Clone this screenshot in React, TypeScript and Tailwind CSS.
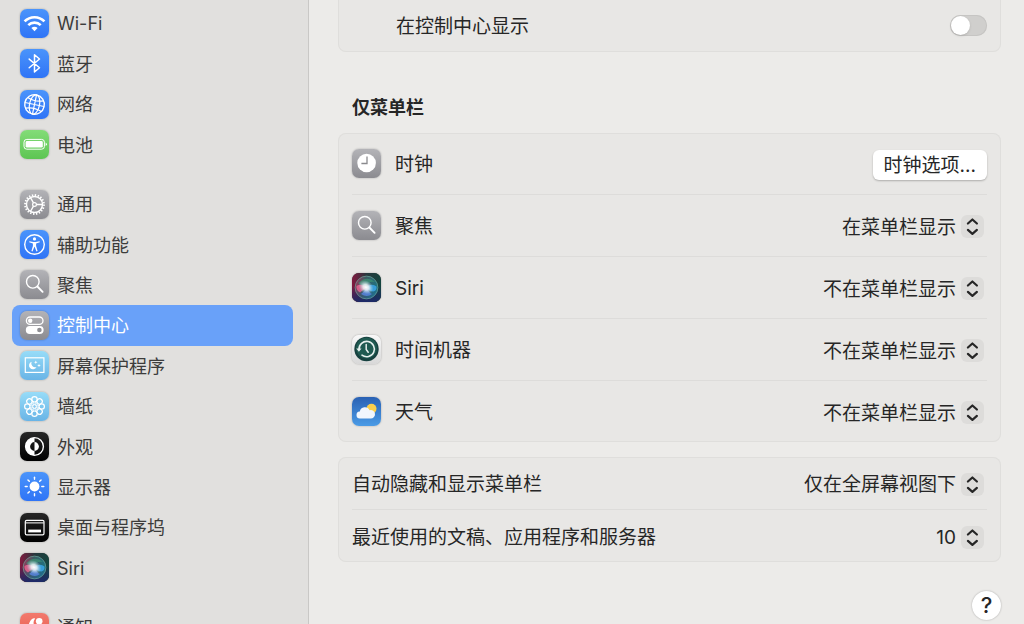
import { useId, useState, type ReactNode } from 'react';
import clsx from 'clsx';

const TILE_COLORS = {
  blue: ['#4a94fb', '#2f74f6'],
  green: ['#83dc78', '#5dc553'],
  gray: ['#b3b3b7', '#8b8b90'],
  sky: ['#97dcf8', '#69b4e6'],
  black: ['#272727', '#000000'],
  red: ['#f27a6d', '#e8584a'],
  white: ['#f8f8f8', '#d8d8d8'],
  weather: ['#2a61b3', '#4a9be6'],
};

function Tile({ color, children }: { color: keyof typeof TILE_COLORS; children: ReactNode }) {
  const id = useId();
  const [from, to] = TILE_COLORS[color];
  return (
    <svg viewBox="0 0 29 29" className="size-[29px] shrink-0 rounded-[7px] shadow-[0_0_2px_rgba(0,0,0,0.3)]" fill="none" aria-hidden="true">
      <defs>
        <linearGradient id={id} x1="0" y1="0" x2="0" y2="1">
          <stop offset="0" stopColor={from} />
          <stop offset="1" stopColor={to} />
        </linearGradient>
      </defs>
      <rect width="29" height="29" fill={`url(#${id})`} />
      {children}
    </svg>
  );
}

function WifiIcon() {
  return (
    <Tile color="blue">
      <g stroke="#fff" strokeWidth="2.6">
        <path d="M4.6 12.4a13.800 13.800 0 0 1 19.800 0" />
        <path d="M8.300 16.200a8.800 8.800 0 0 1 12.400 0" />
      </g>
      <path d="M14.500 22.200l-3.100-3.100a4.400 4.400 0 0 1 6.200 0z" fill="#fff" />
    </Tile>
  );
}

function BluetoothIcon() {
  return (
    <Tile color="blue">
      <path d="M9.200 10.100l10.300 8.700-5 4.200V5.800l5 4.200-10.300 8.700" stroke="#fff" strokeWidth="1.5" strokeLinejoin="round" strokeLinecap="round" />
    </Tile>
  );
}

function NetworkIcon() {
  return (
    <Tile color="blue">
      <g stroke="#fff" strokeWidth="1.2" transform="rotate(12 14.5 14.5)">
        <circle cx="14.5" cy="14.5" r="9.8" strokeWidth="1.4" />
        <ellipse cx="14.5" cy="14.5" rx="5" ry="9.8" />
        <path d="M14.5 4.7v19.600M4.800 14.500h19.400M6.400 9q8.100 3.200 16.200 0M6.400 20q8.100-3.200 16.200 0" />
      </g>
    </Tile>
  );
}

function BatteryIcon() {
  return (
    <Tile color="green">
      <rect x="4" y="9.400" width="20.400" height="9.800" rx="2.800" stroke="#fff" strokeWidth="1" />
      <rect x="5.600" y="11" width="17.200" height="6.600" rx="1.400" fill="#fff" />
      <path d="M25.600 12.600q1.300.5 1.300 1.700t-1.300 1.700z" fill="#fff" />
    </Tile>
  );
}

function GearIcon() {
  return (
    <Tile color="gray">
      <g stroke="#fff">
        <circle cx="14.5" cy="14.5" r="9.400" strokeWidth="2" strokeDasharray="1.4 1.553" />
        <circle cx="14.5" cy="14.5" r="8" strokeWidth="1.4" />
        <circle cx="14.5" cy="14.5" r="1.900" strokeWidth="1.200" />
        <path d="M16.400 14.500h6.100M13.500 12.900l-3.100-5.400M13.500 16.100l-3.100 5.400" strokeWidth="1.400" />
      </g>
    </Tile>
  );
}

function AccessibilityIcon() {
  return (
    <Tile color="blue">
      <circle cx="14.5" cy="14.5" r="9.800" stroke="#fff" strokeWidth="1.400" />
      <circle cx="14.5" cy="8.900" r="1.600" fill="#fff" />
      <path d="M9.400 11.300l3.900.8h2.400l3.900-.8.2 1-3.700 1.100v2.700l1.500 5-1.100.4-1.900-4.700h-.2l-1.900 4.700-1.100-.4 1.500-5v-2.700l-3.700-1.100z" fill="#fff" />
    </Tile>
  );
}

function SearchIcon() {
  return (
    <Tile color="gray">
      <circle cx="12.800" cy="11.800" r="6.300" stroke="#fff" strokeWidth="1.400" />
      <path d="M17.400 16.500l5.200 5.300" stroke="#fff" strokeWidth="1.900" strokeLinecap="round" />
    </Tile>
  );
}

function ControlCenterIcon() {
  return (
    <Tile color="gray">
      <rect x="6.400" y="6" width="16.600" height="7.400" rx="3.700" stroke="#fff" strokeWidth="1.300" />
      <circle cx="10.200" cy="9.700" r="2.200" fill="#fff" />
      <rect x="5.800" y="15" width="17.800" height="8" rx="4" fill="#fff" />
      <circle cx="19.400" cy="19" r="2.300" fill="#8f8f94" />
    </Tile>
  );
}

function ScreenSaverIcon() {
  return (
    <Tile color="sky">
      <rect x="5.300" y="6.800" width="18.600" height="14.600" stroke="#fff" strokeWidth="1.200" />
      <path d="M11.600 10.700a3.900 3.900 0 1 0 4.900 5.200 3.900 3.900 0 0 1-4.900-5.200z" fill="#fff" />
      <path d="M15.800 9.400l.5 1.300 1.300.5-1.300.5-.5 1.300-.5-1.300-1.300-.5 1.300-.5zM19 12.700l.5 1.300 1.300.5-1.300.5-.5 1.300-.5-1.300-1.300-.5 1.300-.5z" fill="#fff" />
    </Tile>
  );
}

const EIGHTHS = [0, 45, 90, 135, 180, 225, 270, 315];

function WallpaperIcon() {
  return (
    <Tile color="sky">
      {EIGHTHS.map((deg) => (
        <g key={deg} transform={`rotate(${deg} 14.5 14.5)`} stroke="#fff" strokeWidth="1.2">
          <circle cx="14.5" cy="7.300" r="2.700" />
          <path d="M13.400 9.800l1.100 4.700 1.100-4.700" strokeWidth="0.700" />
        </g>
      ))}
      <circle cx="14.5" cy="14.5" r="1.800" fill="#86c8ef" stroke="#fff" strokeWidth="1" />
    </Tile>
  );
}

function AppearanceIcon() {
  return (
    <Tile color="black">
      <circle cx="14.5" cy="14.5" r="8.900" stroke="#fff" strokeWidth="1.400" />
      <path d="M14.500 5.600a8.900 8.900 0 0 0 0 17.800v-4.500a4.400 4.400 0 0 1 0-8.800z" fill="#fff" />
      <path d="M14.500 10.100a4.400 4.400 0 0 1 0 8.800z" fill="#fff" />
    </Tile>
  );
}

function DisplayIcon() {
  return (
    <Tile color="blue">
      <circle cx="14.5" cy="14.5" r="4.900" fill="#fff" />
      {EIGHTHS.map((deg) => (
        <path key={deg} d="M14.5 7.200V5.200" transform={`rotate(${deg} 14.5 14.5)`} stroke="#fff" strokeWidth="1.400" strokeLinecap="round" />
      ))}
    </Tile>
  );
}

function DockIcon() {
  return (
    <Tile color="black">
      <rect x="5.300" y="7.400" width="18.700" height="14.400" rx="1.400" stroke="#fff" strokeWidth="1.200" />
      <path d="M5.500 9.900h18.300" stroke="#fff" strokeWidth="1" />
      <rect x="8.200" y="16.600" width="12.800" height="2.800" fill="#fff" />
    </Tile>
  );
}

function SiriIcon() {
  const id = useId();
  return (
    <Tile color="black">
      <defs>
        <linearGradient id={`${id}-bg`} x1="0" y1="0" x2="1" y2="0">
          <stop offset="0" stopColor="#83183f" />
          <stop offset="0.5" stopColor="#28383e" />
          <stop offset="1" stopColor="#15453f" />
        </linearGradient>
        <linearGradient id={`${id}-low`} x1="0" y1="0" x2="0" y2="1">
          <stop offset="0.45" stopColor="#1c2d6b" stopOpacity="0" />
          <stop offset="1" stopColor="#1d2968" />
        </linearGradient>
        <linearGradient id={`${id}-orb`} x1="0" y1="0" x2="1" y2="0.3">
          <stop offset="0" stopColor="#d1406f" />
          <stop offset="0.45" stopColor="#4b7a80" />
          <stop offset="1" stopColor="#2599b4" />
        </linearGradient>
        <radialGradient id={`${id}-glow`}>
          <stop offset="0" stopColor="#fff" />
          <stop offset="0.4" stopColor="#eef4f8" stopOpacity="0.85" />
          <stop offset="1" stopColor="#a9d0e0" stopOpacity="0" />
        </radialGradient>
      </defs>
      <rect width="29" height="29" fill={`url(#${id}-bg)`} />
      <rect width="29" height="29" fill={`url(#${id}-low)`} />
      <circle cx="14.5" cy="14.5" r="11.400" fill={`url(#${id}-orb)`} fillOpacity="0.55" stroke="#6fa79d" strokeOpacity="0.750" strokeWidth="0.900" />
      <path d="M6 10q9-8 17-1-7-1-10 5z" fill="#3f9c77" fillOpacity="0.600" />
      <path d="M4.500 13q5-3 10 1.500L8 19.500Q4 17 4.500 13z" fill="#e8648f" fillOpacity="0.850" />
      <path d="M14 14q6-4 10.500-.5.5 4-3 5-4 0-7.500-4.500z" fill="#3da7e8" fillOpacity="0.850" />
      <path d="M9 21q5-4 6-7 2 6 5 7-5 4-11 0z" fill="#5b86e2" fillOpacity="0.800" />
      <ellipse cx="14" cy="14.200" rx="8" ry="6.500" transform="rotate(35 14 14.2)" fill={`url(#${id}-glow)`} />
    </Tile>
  );
}

function NotificationIcon() {
  return (
    <Tile color="red">
      <path d="M15.200 5.500Q12 4.500 9.500 9.500L6.500 17.500a5 5 0 0 0 3.500 6.500h9a5 5 0 0 0 5-5v-5.200A5.500 5.500 0 0 1 15.200 5.500z" fill="#fff" />
      <circle cx="19.200" cy="8.300" r="3.300" fill="#fff" />
    </Tile>
  );
}

function ClockIcon() {
  return (
    <Tile color="gray">
      <circle cx="14.600" cy="14" r="9.300" fill="#fff" />
      <path d="M15 7.600v6.900H9.400" stroke="#8a8a8e" strokeWidth="1.300" />
    </Tile>
  );
}

function TimeMachineIcon() {
  return (
    <Tile color="white">
      <circle cx="14.500" cy="14" r="12.200" fill="#17413f" />
      <circle cx="14.500" cy="13" r="10.500" fill="#256b5d" fillOpacity="0.600" />
      <path d="M7 14.500A7.700 7.700 0 1 1 10 20.200" stroke="#e5efed" strokeWidth="1.600" strokeLinecap="round" />
      <path d="M4.300 13.400h5.200L6.900 16.800z" fill="#e5efed" />
      <path d="M14.200 9.400v5l2 2.900" stroke="#e5efed" strokeWidth="1.500" strokeLinecap="round" />
    </Tile>
  );
}

function WeatherIcon() {
  return (
    <Tile color="weather">
      <circle cx="19.500" cy="11.800" r="5" fill="#fbcf4b" />
      <path d="M8.200 21.500a3.500 3.500 0 0 1-.4-7 5.200 5.200 0 0 1 9.800-1.200 4.200 4.200 0 1 1 .8 8.200z" fill="#f1f6fd" />
    </Tile>
  );
}

const SIDEBAR_GROUPS = [
  {
    className: 'min-h-[162px]',
    items: [
      { label: 'Wi-Fi', icon: <WifiIcon /> },
      { label: '蓝牙', icon: <BluetoothIcon /> },
      { label: '网络', icon: <NetworkIcon /> },
      { label: '电池', icon: <BatteryIcon /> },
    ],
  },
  {
    className: 'min-h-[404px]',
    items: [
      { label: '通用', icon: <GearIcon /> },
      { label: '辅助功能', icon: <AccessibilityIcon /> },
      { label: '聚焦', icon: <SearchIcon /> },
      { label: '控制中心', icon: <ControlCenterIcon /> },
      { label: '屏幕保护程序', icon: <ScreenSaverIcon /> },
      { label: '墙纸', icon: <WallpaperIcon /> },
      { label: '外观', icon: <AppearanceIcon /> },
      { label: '显示器', icon: <DisplayIcon /> },
      { label: '桌面与程序坞', icon: <DockIcon /> },
      { label: 'Siri', icon: <SiriIcon /> },
    ],
  },
  {
    className: 'min-h-10',
    items: [{ label: '通知', icon: <NotificationIcon /> }],
  },
];

function Sidebar() {
  const [active, setActive] = useState('控制中心');

  return (
    <nav className="flex w-[309px] shrink-0 flex-col gap-[19px] border-r border-[#c9c8c6] bg-[#e1e0de] pt-[3px] pr-[15px] pl-3">
      {SIDEBAR_GROUPS.map((group, i) => (
        <ul key={i} className={clsx('grid shrink-0 auto-rows-fr', group.className)}>
          {group.items.map(({ label, icon }) => (
            <li key={label} className="grid">
              <button
                type="button"
                onClick={() => setActive(label)}
                className={clsx(
                  'flex items-center gap-2 rounded-lg px-2 text-left text-[18px] leading-6',
                  active === label ? 'bg-[#69a1f9] text-white' : 'text-[#3c3c3b]',
                )}
              >
                {icon}
                <span className="pt-0.5">{label}</span>
              </button>
            </li>
          ))}
        </ul>
      ))}
    </nav>
  );
}

function Card({ children, className }: { children: ReactNode; className?: string }) {
  return (
    <div className={clsx('divide-y divide-[#dddcda] bg-[#e8e7e5] px-[14px] inset-ring-1 inset-ring-[#dfdedc]', className ?? 'rounded-lg')}>
      {children}
    </div>
  );
}

function Popup({ id, value, options }: { id: string; value: string; options: string[] }) {
  return (
    <div className="mr-[3px] grid items-center pt-0.5">
      <select
        id={id}
        defaultValue={value}
        className="field-sizing-content appearance-none bg-transparent pt-0.5 pr-[28px] text-right leading-6 outline-none [grid-area:1/1]"
      >
        {options.map((option) => (
          <option key={option}>{option}</option>
        ))}
      </select>
      <svg viewBox="0 0 23 23" className="pointer-events-none size-[23px] justify-self-end rounded-md bg-[#dddcda] [grid-area:1/1]" fill="none" aria-hidden="true">
        <path d="M6.900 8.500l4.500-4 4.500 4M6.900 14.900l4.500 4 4.500-4" stroke="#262626" strokeWidth="2.200" strokeLinecap="round" strokeLinejoin="round" />
      </svg>
    </div>
  );
}

const MENU_BAR_OPTIONS = ['在菜单栏显示', '不在菜单栏显示'];

const MENU_BAR_ITEMS = [
  { id: 'spotlight', label: '聚焦', icon: <SearchIcon />, value: '在菜单栏显示' },
  { id: 'siri', label: 'Siri', icon: <SiriIcon />, value: '不在菜单栏显示' },
  { id: 'time-machine', label: '时间机器', icon: <TimeMachineIcon />, value: '不在菜单栏显示' },
  { id: 'weather', label: '天气', icon: <WeatherIcon />, value: '不在菜单栏显示' },
];

export default function App() {
  const [inControlCenter, setInControlCenter] = useState(false);

  return (
    <div className="flex h-screen overflow-hidden bg-[#ecebe9] font-['Inter','Noto_Sans_CJK_SC',sans-serif] text-[#262626]">
      <Sidebar />

      <main className="flex min-w-0 flex-1 flex-col pr-[23px] pl-[29px] text-[19px] leading-6">
        <Card className="-mt-px rounded-b-lg">
          <div className="flex min-h-[53px] items-center justify-between pl-[44px]">
            <label htmlFor="control-center" className="pt-0.5">在控制中心显示</label>
            <input
              id="control-center"
              type="checkbox"
              role="switch"
              checked={inControlCenter}
              onChange={(e) => setInControlCenter(e.target.checked)}
              className="h-[21px] w-[37px] appearance-none rounded-full bg-[#d0cfcd] inset-ring-1 inset-ring-[#c6c5c3] before:m-px before:block before:size-[19px] before:rounded-full before:bg-white before:shadow-sm checked:bg-[#3478f6] checked:before:ml-[17px]"
            />
          </div>
        </Card>

        {/* Menu bar only */}
        <h2 className="mt-[44px] mb-[13px] pl-[14px] text-[18px] leading-6 font-bold">仅菜单栏</h2>
        <Card>
          <div className="flex min-h-[62px] items-center gap-[14px]">
            <ClockIcon />
            <span className="flex-1 pt-[3px]">时钟</span>
            <button type="button" className="mt-0.5 rounded-md bg-white px-[11px] pt-1 pb-0.5 shadow-[0_1px_2px_rgba(0,0,0,0.25)]">
              时钟选项...
            </button>
          </div>
          {MENU_BAR_ITEMS.map(({ id, label, icon, value }) => (
            <div key={id} className="flex min-h-[62px] items-center gap-[14px] last:min-h-[61px]">
              {icon}
              <label htmlFor={id} className="flex-1 pt-[3px]">{label}</label>
              <Popup id={id} value={value} options={MENU_BAR_OPTIONS} />
            </div>
          ))}
        </Card>

        <div className="mt-[15px]">
          <Card>
            <div className="flex min-h-[53px] items-center justify-between">
              <label htmlFor="auto-hide" className="pt-[3px]">自动隐藏和显示菜单栏</label>
              <Popup id="auto-hide" value="仅在全屏幕视图下" options={['始终', '仅在桌面上', '仅在全屏幕视图下', '永不']} />
            </div>
            <div className="flex min-h-[52px] items-center justify-between">
              <label htmlFor="recent-items" className="pt-[3px]">最近使用的文稿、应用程序和服务器</label>
              <Popup id="recent-items" value="10" options={['无', '5', '10', '15', '20']} />
            </div>
          </Card>
        </div>

        <button
          type="button"
          aria-label="帮助"
          className="mt-[29px] size-[29px] shrink-0 self-end rounded-full bg-white text-[22px] leading-[29px] font-medium shadow-[0_0_2px_rgba(0,0,0,0.3)]"
        >
          ?
        </button>
      </main>
    </div>
  );
}
